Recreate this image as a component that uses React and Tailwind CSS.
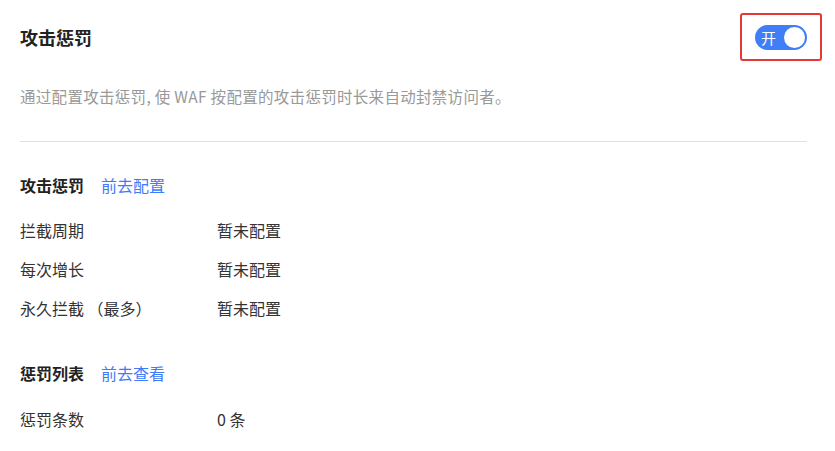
import React, { useState } from 'react';

const font = { fontFamily: '"Microsoft YaHei", "Noto Sans CJK SC", "Liberation Sans", sans-serif' };

const Row = ({ label, value }) => (
    <div className="flex items-center h-[39px] text-[16px] text-[#333]">
        <span className="w-[197px]">{label}</span>
        <span>{value}</span>
    </div>
);

const App = () => {
    const [enabled, setEnabled] = useState(true);

    return (
        <div className="w-[835px] h-[451px] bg-white px-5 overflow-hidden" style={font}>
            {/* Header */}
            <div className="flex items-center justify-between pt-[13px]">
                <h2 className="text-[18px] font-bold text-[#222] leading-[48px]">攻击惩罚</h2>
                <div className="w-[82px] h-[48px] border-2 border-[#e53935] rounded-[3px] flex items-center justify-center mr-[-7px]">
                    <button
                        onClick={() => setEnabled(!enabled)}
                        className={`w-[52px] h-[25px] rounded-full flex items-center pl-[6px] pr-[2px] ${enabled ? 'bg-[#3f7ef6]' : 'bg-gray-300'}`}
                    >
                        <span className="text-white text-[15px] leading-none flex-1 text-left">开</span>
                        <span className="w-[21px] h-[21px] rounded-full bg-white" />
                    </button>
                </div>
            </div>

            <p className="text-[15.5px] tracking-[0.3px] text-[#999] mt-[11px] leading-[48px]">
                通过配置攻击惩罚, 使 WAF 按配置的攻击惩罚时长来自动封禁访问者。
            </p>

            <div className="w-[787px] border-t border-[#e0e0e0] mt-[21px]" />

            {/* Attack punishment config */}
            <div className="flex items-center gap-[17px] mt-[30px] h-[26px]">
                <span className="text-[16px] font-bold text-[#222]">攻击惩罚</span>
                <a className="text-[16px] text-[#3d7bfa] cursor-pointer">前去配置</a>
            </div>
            <div className="mt-[12px]">
                <Row label="拦截周期" value="暂未配置" />
                <Row label="每次增长" value="暂未配置" />
                <Row label="永久拦截 （最多）" value="暂未配置" />
            </div>

            {/* Punishment list */}
            <div className="flex items-center gap-[17px] mt-[33px] h-[26px]">
                <span className="text-[16px] font-bold text-[#222]">惩罚列表</span>
                <a className="text-[16px] text-[#3d7bfa] cursor-pointer">前去查看</a>
            </div>
            <div className="mt-[13px]">
                <Row label="惩罚条数" value="0 条" />
            </div>
        </div>
    );
};

export default App;
